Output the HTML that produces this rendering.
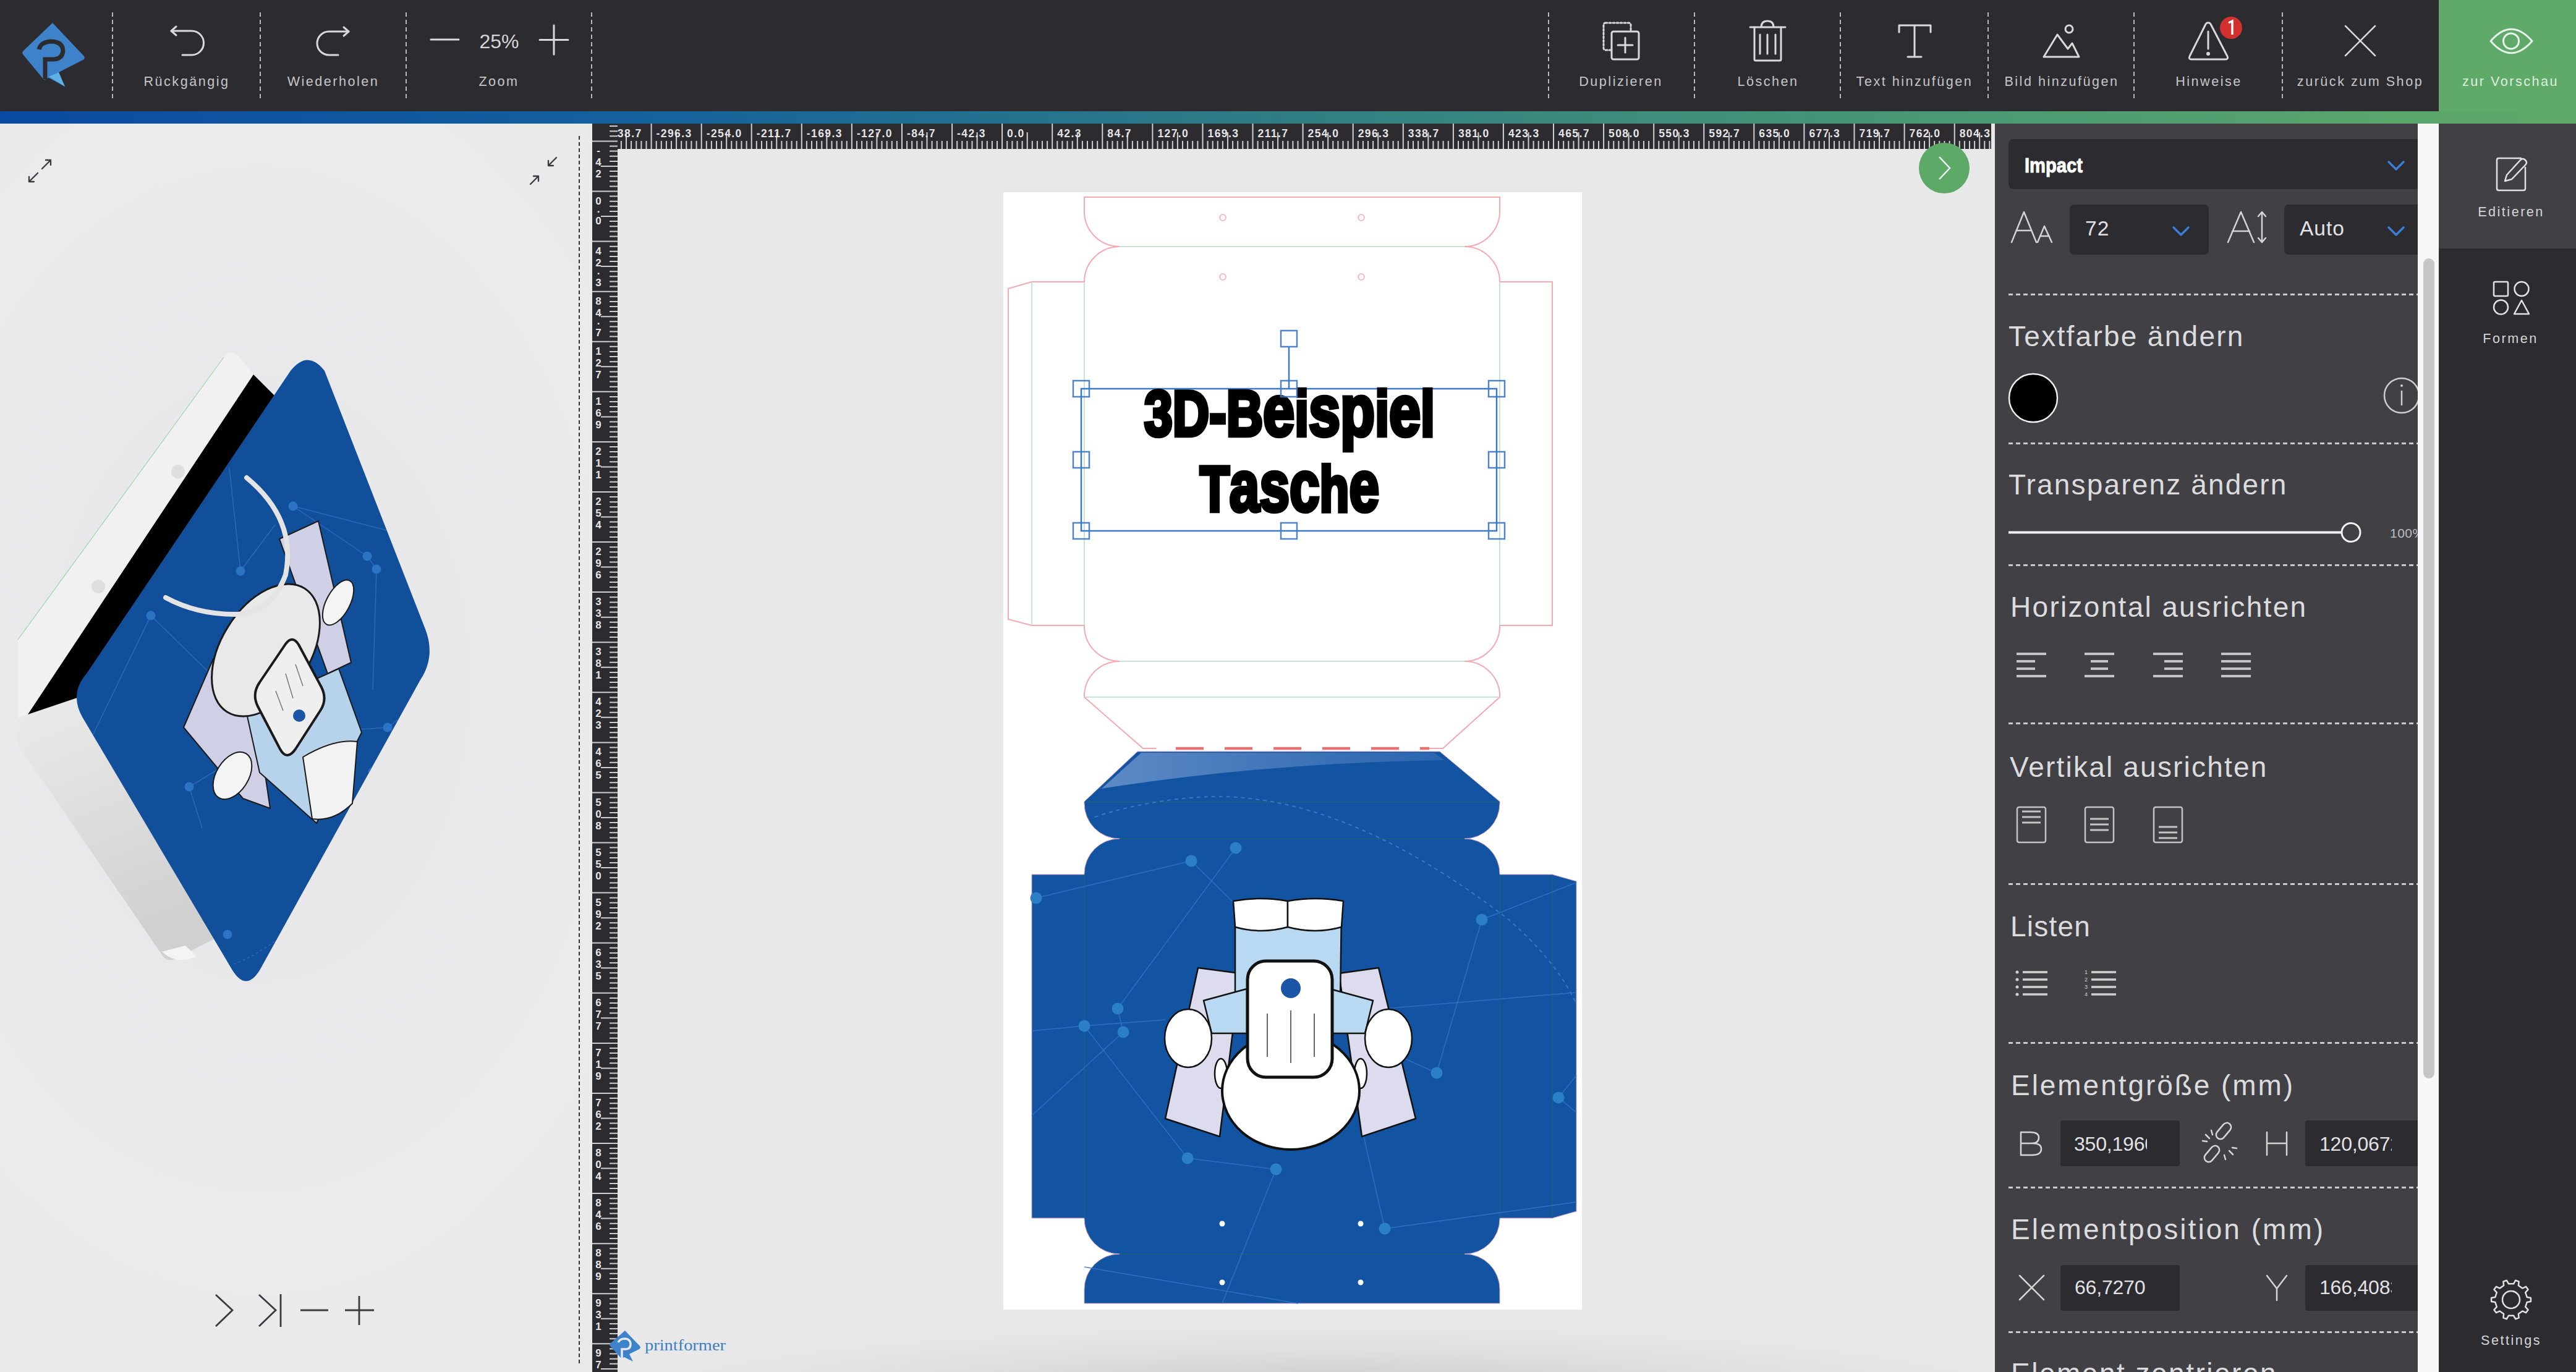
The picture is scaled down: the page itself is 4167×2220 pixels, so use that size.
<!DOCTYPE html>
<html><head><meta charset="utf-8">
<style>
html,body{margin:0;padding:0;}
body{width:4167px;height:2220px;overflow:hidden;position:relative;background:#e8e8e9;font-family:"Liberation Sans", sans-serif;}
.a{position:absolute;}
.hl{position:absolute;color:#c6c6c8;font-size:21.6px;letter-spacing:2.5px;white-space:nowrap;line-height:1;}
.dv{position:absolute;top:20px;height:140px;width:2px;background:repeating-linear-gradient(180deg,#b9b9bb 0 7px,transparent 7px 12px);}
.ph{position:absolute;color:#dcdcde;font-size:46px;letter-spacing:2.3px;white-space:nowrap;line-height:1;}
.sep{position:absolute;left:3249px;width:662px;height:3px;background:repeating-linear-gradient(90deg,#c9c9cb 0 7px,transparent 7px 12px);}
.inp{position:absolute;background:#2c2b30;border-radius:7px;}
.it{position:absolute;color:#e2e2e4;font-size:33px;letter-spacing:1px;white-space:nowrap;line-height:1;}
</style></head><body>

<div class="a" style="left:0;top:200px;width:958px;height:2020px;background:radial-gradient(ellipse 900px 1300px at 420px 900px,#e6e6e8 0%,#ebebec 70%,#e9e9ea 100%);"></div>
<div class="a" style="left:936px;top:220px;height:1986px;width:0;border-left:2px dashed #333;"></div>
<div class="a" style="left:999px;top:241px;width:2228px;height:1979px;background:#e8e8e8;"></div>
<div class="a" style="left:1000px;top:2100px;width:2227px;height:120px;background:radial-gradient(ellipse 1150px 110px at 1150px 150px,rgba(0,0,0,0.13),rgba(0,0,0,0.04) 60%,rgba(0,0,0,0) 100%);"></div>
<div class="a" style="left:0;top:0;width:4167px;height:180px;background:#2c2b30;"></div>
<div class="a" style="left:0;top:180px;width:4167px;height:20px;background:linear-gradient(90deg,#0a4aa2 0%,#15619c 25%,#307e84 50%,#4a9874 75%,#5eaa69 100%);"></div>
<div class="a" style="left:3945px;top:0;width:222px;height:180px;background:#5faa69;"></div>
<div class="dv" style="left:181px;"></div>
<div class="dv" style="left:420px;"></div>
<div class="dv" style="left:656px;"></div>
<div class="dv" style="left:956px;"></div>
<div class="dv" style="left:2504px;"></div>
<div class="dv" style="left:2740px;"></div>
<div class="dv" style="left:2976px;"></div>
<div class="dv" style="left:3215px;"></div>
<div class="dv" style="left:3451px;"></div>
<div class="dv" style="left:3691px;"></div>
<div class="hl" style="left:152px;width:300px;text-align:center;top:121px;">Rückgängig</div>
<div class="hl" style="left:389px;width:300px;text-align:center;top:121px;">Wiederholen</div>
<div class="hl" style="left:657px;width:300px;text-align:center;top:121px;">Zoom</div>
<div class="hl" style="left:2472px;width:300px;text-align:center;top:121px;">Duplizieren</div>
<div class="hl" style="left:2710px;width:300px;text-align:center;top:121px;">Löschen</div>
<div class="hl" style="left:2947px;width:300px;text-align:center;top:121px;">Text hinzufügen</div>
<div class="hl" style="left:3185px;width:300px;text-align:center;top:121px;">Bild hinzufügen</div>
<div class="hl" style="left:3423px;width:300px;text-align:center;top:121px;">Hinweise</div>
<div class="hl" style="left:3668px;width:300px;text-align:center;top:121px;">zurück zum Shop</div>
<div class="hl" style="left:3911px;width:300px;text-align:center;top:121px;color:#dfeedf;">zur Vorschau</div>
<div class="hl" style="left:740px;width:135px;text-align:center;top:51px;font-size:32px;letter-spacing:0;color:#d6d6d8;">25%</div>
<svg class="a" style="left:0;top:0;" width="4167" height="180" viewBox="0 0 4167 180">
<g>
 <path d="M85,37 L136,91 Q138,95 134,97 L95,117 L105,140 L79,126 L71,129 L37,88 Q35,85 38,82 Z" fill="#3e83c9"/>
 <path d="M79,124 L95,117 L105,140 Z" fill="#5fb0e6"/>
 <path d="M63,80 Q66,68 82,67 Q101,67 102,82 Q101,96 85,96 L73,96 L73,128" fill="none" stroke="#2c2b30" stroke-width="7" stroke-linecap="butt"/>
</g>
<g fill="none" stroke="#d9d9db" stroke-width="3" stroke-linecap="round" stroke-linejoin="round">
 <path d="M277,50 L310,50 A19.5,19.5 0 0 1 310,89 L295,89"/>
 <path d="M285,43 L277,50 L285,57"/>
 <path d="M564,51 L532,51 A19,19 0 0 0 532,89 L547,89"/>
 <path d="M556,44 L564,51 L556,58"/>
 <path d="M697,64 L742,64"/>
 <path d="M873,64.5 L919,64.5 M896,41 L896,88"/>
 <rect x="2594" y="37" width="44" height="44" rx="3" stroke-dasharray="3 3"/>
 <rect x="2607" y="51" width="44" height="45" rx="3" fill="#2c2b30"/>
 <path d="M2617,73 L2641,73 M2629,61 L2629,85"/>
 <path d="M2831,44 L2888,44 M2849,44 Q2849,34 2859,34 Q2869,34 2869,44"/>
 <path d="M2838,44 L2838,96 Q2838,98 2840,98 L2879,98 Q2881,98 2881,96 L2881,44"/>
 <path d="M2847,56 L2847,87 M2859,56 L2859,87 M2872,56 L2872,87"/>
 <path d="M3072,52 L3072,41 L3123,41 L3123,52 M3097,41 L3097,92 M3086,92 L3108,92"/>
 <circle cx="3347" cy="47" r="6"/>
 <path d="M3306,92 L3328,56 L3345,79 L3352,70 L3363,92 Z"/>
 <path d="M3572,37 Q3574,36 3576,39 L3603,91 Q3605,96 3600,96 L3545,96 Q3540,96 3542,91 L3568,39 Q3570,36 3572,37 Z"/>
 <path d="M3572,51 L3572,79"/>
 <path d="M3794,42 L3842,90 M3842,42 L3794,90" stroke-width="2.5"/>
 <path d="M4029,66.5 Q4062,28 4096,66.5 Q4062,105 4029,66.5 Z" stroke="#e8f3ea"/>
 <circle cx="4062" cy="66.5" r="12.5" stroke="#e8f3ea"/>
</g>
<circle cx="3572" cy="87" r="3" fill="#d9d9db"/>
<circle cx="3609" cy="45" r="18" fill="#d1302e"/>
<path d="M3605,37 L3611,34 L3611,56" fill="none" stroke="#fff" stroke-width="3.5"/>
</svg>
<svg class="a" style="left:0;top:0;" width="4167" height="2220" viewBox="0 0 4167 2220"><rect x="958" y="200" width="41" height="2020" fill="#2c2b30"/><rect x="999" y="200" width="2222" height="41" fill="#2c2b30"/><path d="M1004.9,228V241M1013.0,214V241M1021.1,228V241M1029.3,228V241M1037.4,228V241M1045.5,228V241M1053.6,200V241M1061.7,228V241M1069.8,228V241M1077.9,228V241M1086.0,228V241M1094.1,214V241M1102.2,228V241M1110.3,228V241M1118.4,228V241M1126.6,228V241M1134.7,200V241M1142.8,228V241M1150.9,228V241M1159.0,228V241M1167.1,228V241M1175.2,214V241M1183.3,228V241M1191.4,228V241M1199.5,228V241M1207.6,228V241M1215.7,200V241M1223.8,228V241M1232.0,228V241M1240.1,228V241M1248.2,228V241M1256.3,214V241M1264.4,228V241M1272.5,228V241M1280.6,228V241M1288.7,228V241M1296.8,200V241M1304.9,228V241M1313.0,228V241M1321.1,228V241M1329.3,228V241M1337.4,214V241M1345.5,228V241M1353.6,228V241M1361.7,228V241M1369.8,228V241M1377.9,200V241M1386.0,228V241M1394.1,228V241M1402.2,228V241M1410.3,228V241M1418.4,214V241M1426.5,228V241M1434.7,228V241M1442.8,228V241M1450.9,228V241M1459.0,200V241M1467.1,228V241M1475.2,228V241M1483.3,228V241M1491.4,228V241M1499.5,214V241M1507.6,228V241M1515.7,228V241M1523.8,228V241M1532.0,228V241M1540.1,200V241M1548.2,228V241M1556.3,228V241M1564.4,228V241M1572.5,228V241M1580.6,214V241M1588.7,228V241M1596.8,228V241M1604.9,228V241M1613.0,228V241M1621.1,200V241M1629.2,228V241M1637.4,228V241M1645.5,228V241M1653.6,228V241M1661.7,214V241M1669.8,228V241M1677.9,228V241M1686.0,228V241M1694.1,228V241M1702.2,200V241M1710.3,228V241M1718.4,228V241M1726.5,228V241M1734.7,228V241M1742.8,214V241M1750.9,228V241M1759.0,228V241M1767.1,228V241M1775.2,228V241M1783.3,200V241M1791.4,228V241M1799.5,228V241M1807.6,228V241M1815.7,228V241M1823.8,214V241M1831.9,228V241M1840.1,228V241M1848.2,228V241M1856.3,228V241M1864.4,200V241M1872.5,228V241M1880.6,228V241M1888.7,228V241M1896.8,228V241M1904.9,214V241M1913.0,228V241M1921.1,228V241M1929.2,228V241M1937.4,228V241M1945.5,200V241M1953.6,228V241M1961.7,228V241M1969.8,228V241M1977.9,228V241M1986.0,214V241M1994.1,228V241M2002.2,228V241M2010.3,228V241M2018.4,228V241M2026.5,200V241M2034.6,228V241M2042.8,228V241M2050.9,228V241M2059.0,228V241M2067.1,214V241M2075.2,228V241M2083.3,228V241M2091.4,228V241M2099.5,228V241M2107.6,200V241M2115.7,228V241M2123.8,228V241M2131.9,228V241M2140.1,228V241M2148.2,214V241M2156.3,228V241M2164.4,228V241M2172.5,228V241M2180.6,228V241M2188.7,200V241M2196.8,228V241M2204.9,228V241M2213.0,228V241M2221.1,228V241M2229.2,214V241M2237.3,228V241M2245.5,228V241M2253.6,228V241M2261.7,228V241M2269.8,200V241M2277.9,228V241M2286.0,228V241M2294.1,228V241M2302.2,228V241M2310.3,214V241M2318.4,228V241M2326.5,228V241M2334.6,228V241M2342.8,228V241M2350.9,200V241M2359.0,228V241M2367.1,228V241M2375.2,228V241M2383.3,228V241M2391.4,214V241M2399.5,228V241M2407.6,228V241M2415.7,228V241M2423.8,228V241M2431.9,200V241M2440.0,228V241M2448.2,228V241M2456.3,228V241M2464.4,228V241M2472.5,214V241M2480.6,228V241M2488.7,228V241M2496.8,228V241M2504.9,228V241M2513.0,200V241M2521.1,228V241M2529.2,228V241M2537.3,228V241M2545.5,228V241M2553.6,214V241M2561.7,228V241M2569.8,228V241M2577.9,228V241M2586.0,228V241M2594.1,200V241M2602.2,228V241M2610.3,228V241M2618.4,228V241M2626.5,228V241M2634.6,214V241M2642.7,228V241M2650.9,228V241M2659.0,228V241M2667.1,228V241M2675.2,200V241M2683.3,228V241M2691.4,228V241M2699.5,228V241M2707.6,228V241M2715.7,214V241M2723.8,228V241M2731.9,228V241M2740.0,228V241M2748.2,228V241M2756.3,200V241M2764.4,228V241M2772.5,228V241M2780.6,228V241M2788.7,228V241M2796.8,214V241M2804.9,228V241M2813.0,228V241M2821.1,228V241M2829.2,228V241M2837.3,200V241M2845.4,228V241M2853.6,228V241M2861.7,228V241M2869.8,228V241M2877.9,214V241M2886.0,228V241M2894.1,228V241M2902.2,228V241M2910.3,228V241M2918.4,200V241M2926.5,228V241M2934.6,228V241M2942.7,228V241M2950.9,228V241M2959.0,214V241M2967.1,228V241M2975.2,228V241M2983.3,228V241M2991.4,228V241M2999.5,200V241M3007.6,228V241M3015.7,228V241M3023.8,228V241M3031.9,228V241M3040.0,214V241M3048.1,228V241M3056.3,228V241M3064.4,228V241M3072.5,228V241M3080.6,200V241M3088.7,228V241M3096.8,228V241M3104.9,228V241M3113.0,228V241M3121.1,214V241M3129.2,228V241M3137.3,228V241M3145.4,228V241M3153.6,228V241M3161.7,200V241M3169.8,228V241M3177.9,228V241M3186.0,228V241M3194.1,228V241M3202.2,214V241M3210.3,228V241M3218.4,228V241" stroke="#d0d0d2" stroke-width="2" fill="none"/><clipPath id="trc"><rect x="999" y="200" width="2222" height="41"/></clipPath><g clip-path="url(#trc)" font-family="Liberation Sans" font-weight="bold" font-size="17.5" letter-spacing="1.4" fill="#e4e4e6"><text x="980.5" y="221.5">-338.7</text><text x="1061.6" y="221.5">-296.3</text><text x="1142.7" y="221.5">-254.0</text><text x="1223.7" y="221.5">-211.7</text><text x="1304.8" y="221.5">-169.3</text><text x="1385.9" y="221.5">-127.0</text><text x="1467.0" y="221.5">-84.7</text><text x="1548.1" y="221.5">-42.3</text><text x="1629.1" y="221.5">0.0</text><text x="1710.2" y="221.5">42.3</text><text x="1791.3" y="221.5">84.7</text><text x="1872.4" y="221.5">127.0</text><text x="1953.5" y="221.5">169.3</text><text x="2034.5" y="221.5">211.7</text><text x="2115.6" y="221.5">254.0</text><text x="2196.7" y="221.5">296.3</text><text x="2277.8" y="221.5">338.7</text><text x="2358.9" y="221.5">381.0</text><text x="2439.9" y="221.5">423.3</text><text x="2521.0" y="221.5">465.7</text><text x="2602.1" y="221.5">508.0</text><text x="2683.2" y="221.5">550.3</text><text x="2764.3" y="221.5">592.7</text><text x="2845.3" y="221.5">635.0</text><text x="2926.4" y="221.5">677.3</text><text x="3007.5" y="221.5">719.7</text><text x="3088.6" y="221.5">762.0</text><text x="3169.7" y="221.5">804.3</text></g><path d="M986,204.1H999M986,212.2H999M986,220.3H999M958,228.4H999M986,236.5H999M986,244.6H999M986,252.7H999M986,260.9H999M972,269.0H999M986,277.1H999M986,285.2H999M986,293.3H999M986,301.4H999M958,309.5H999M986,317.6H999M986,325.7H999M986,333.8H999M986,341.9H999M972,350.0H999M986,358.1H999M986,366.3H999M986,374.4H999M986,382.5H999M958,390.6H999M986,398.7H999M986,406.8H999M986,414.9H999M986,423.0H999M972,431.1H999M986,439.2H999M986,447.3H999M986,455.4H999M986,463.6H999M958,471.7H999M986,479.8H999M986,487.9H999M986,496.0H999M986,504.1H999M972,512.2H999M986,520.3H999M986,528.4H999M986,536.5H999M986,544.6H999M958,552.7H999M986,560.8H999M986,569.0H999M986,577.1H999M986,585.2H999M972,593.3H999M986,601.4H999M986,609.5H999M986,617.6H999M986,625.7H999M958,633.8H999M986,641.9H999M986,650.0H999M986,658.1H999M986,666.3H999M972,674.4H999M986,682.5H999M986,690.6H999M986,698.7H999M986,706.8H999M958,714.9H999M986,723.0H999M986,731.1H999M986,739.2H999M986,747.3H999M972,755.4H999M986,763.5H999M986,771.7H999M986,779.8H999M986,787.9H999M958,796.0H999M986,804.1H999M986,812.2H999M986,820.3H999M986,828.4H999M972,836.5H999M986,844.6H999M986,852.7H999M986,860.8H999M986,869.0H999M958,877.1H999M986,885.2H999M986,893.3H999M986,901.4H999M986,909.5H999M972,917.6H999M986,925.7H999M986,933.8H999M986,941.9H999M986,950.0H999M958,958.1H999M986,966.2H999M986,974.4H999M986,982.5H999M986,990.6H999M972,998.7H999M986,1006.8H999M986,1014.9H999M986,1023.0H999M986,1031.1H999M958,1039.2H999M986,1047.3H999M986,1055.4H999M986,1063.5H999M986,1071.7H999M972,1079.8H999M986,1087.9H999M986,1096.0H999M986,1104.1H999M986,1112.2H999M958,1120.3H999M986,1128.4H999M986,1136.5H999M986,1144.6H999M986,1152.7H999M972,1160.8H999M986,1168.9H999M986,1177.1H999M986,1185.2H999M986,1193.3H999M958,1201.4H999M986,1209.5H999M986,1217.6H999M986,1225.7H999M986,1233.8H999M972,1241.9H999M986,1250.0H999M986,1258.1H999M986,1266.2H999M986,1274.4H999M958,1282.5H999M986,1290.6H999M986,1298.7H999M986,1306.8H999M986,1314.9H999M972,1323.0H999M986,1331.1H999M986,1339.2H999M986,1347.3H999M986,1355.4H999M958,1363.5H999M986,1371.6H999M986,1379.8H999M986,1387.9H999M986,1396.0H999M972,1404.1H999M986,1412.2H999M986,1420.3H999M986,1428.4H999M986,1436.5H999M958,1444.6H999M986,1452.7H999M986,1460.8H999M986,1468.9H999M986,1477.1H999M972,1485.2H999M986,1493.3H999M986,1501.4H999M986,1509.5H999M986,1517.6H999M958,1525.7H999M986,1533.8H999M986,1541.9H999M986,1550.0H999M986,1558.1H999M972,1566.2H999M986,1574.3H999M986,1582.5H999M986,1590.6H999M986,1598.7H999M958,1606.8H999M986,1614.9H999M986,1623.0H999M986,1631.1H999M986,1639.2H999M972,1647.3H999M986,1655.4H999M986,1663.5H999M986,1671.6H999M986,1679.8H999M958,1687.9H999M986,1696.0H999M986,1704.1H999M986,1712.2H999M986,1720.3H999M972,1728.4H999M986,1736.5H999M986,1744.6H999M986,1752.7H999M986,1760.8H999M958,1768.9H999M986,1777.0H999M986,1785.2H999M986,1793.3H999M986,1801.4H999M972,1809.5H999M986,1817.6H999M986,1825.7H999M986,1833.8H999M986,1841.9H999M958,1850.0H999M986,1858.1H999M986,1866.2H999M986,1874.3H999M986,1882.5H999M972,1890.6H999M986,1898.7H999M986,1906.8H999M986,1914.9H999M986,1923.0H999M958,1931.1H999M986,1939.2H999M986,1947.3H999M986,1955.4H999M986,1963.5H999M972,1971.6H999M986,1979.7H999M986,1987.9H999M986,1996.0H999M986,2004.1H999M958,2012.2H999M986,2020.3H999M986,2028.4H999M986,2036.5H999M986,2044.6H999M972,2052.7H999M986,2060.8H999M986,2068.9H999M986,2077.0H999M986,2085.2H999M958,2093.3H999M986,2101.4H999M986,2109.5H999M986,2117.6H999M986,2125.7H999M972,2133.8H999M986,2141.9H999M986,2150.0H999M986,2158.1H999M986,2166.2H999M958,2174.3H999M986,2182.4H999M986,2190.6H999M986,2198.7H999M986,2206.8H999M972,2214.9H999" stroke="#d0d0d2" stroke-width="2" fill="none"/><g font-family="Liberation Sans" font-weight="bold" font-size="17" fill="#e4e4e6" text-anchor="middle"><text x="968" y="249.4">-</text><text x="968" y="268.4">4</text><text x="968" y="287.4">2</text><text x="968" y="330.5">0</text><text x="968" y="343.5">.</text><text x="968" y="362.5">0</text><text x="968" y="411.6">4</text><text x="968" y="430.6">2</text><text x="968" y="443.6">.</text><text x="968" y="462.6">3</text><text x="968" y="492.7">8</text><text x="968" y="511.7">4</text><text x="968" y="524.7">.</text><text x="968" y="543.7">7</text><text x="968" y="573.7">1</text><text x="968" y="592.7">2</text><text x="968" y="611.7">7</text><text x="968" y="654.8">1</text><text x="968" y="673.8">6</text><text x="968" y="692.8">9</text><text x="968" y="735.9">2</text><text x="968" y="754.9">1</text><text x="968" y="773.9">1</text><text x="968" y="817.0">2</text><text x="968" y="836.0">5</text><text x="968" y="855.0">4</text><text x="968" y="898.1">2</text><text x="968" y="917.1">9</text><text x="968" y="936.1">6</text><text x="968" y="979.1">3</text><text x="968" y="998.1">3</text><text x="968" y="1017.1">8</text><text x="968" y="1060.2">3</text><text x="968" y="1079.2">8</text><text x="968" y="1098.2">1</text><text x="968" y="1141.3">4</text><text x="968" y="1160.3">2</text><text x="968" y="1179.3">3</text><text x="968" y="1222.4">4</text><text x="968" y="1241.4">6</text><text x="968" y="1260.4">5</text><text x="968" y="1303.5">5</text><text x="968" y="1322.5">0</text><text x="968" y="1341.5">8</text><text x="968" y="1384.5">5</text><text x="968" y="1403.5">5</text><text x="968" y="1422.5">0</text><text x="968" y="1465.6">5</text><text x="968" y="1484.6">9</text><text x="968" y="1503.6">2</text><text x="968" y="1546.7">6</text><text x="968" y="1565.7">3</text><text x="968" y="1584.7">5</text><text x="968" y="1627.8">6</text><text x="968" y="1646.8">7</text><text x="968" y="1665.8">7</text><text x="968" y="1708.9">7</text><text x="968" y="1727.9">1</text><text x="968" y="1746.9">9</text><text x="968" y="1789.9">7</text><text x="968" y="1808.9">6</text><text x="968" y="1827.9">2</text><text x="968" y="1871.0">8</text><text x="968" y="1890.0">0</text><text x="968" y="1909.0">4</text><text x="968" y="1952.1">8</text><text x="968" y="1971.1">4</text><text x="968" y="1990.1">6</text><text x="968" y="2033.2">8</text><text x="968" y="2052.2">8</text><text x="968" y="2071.2">9</text><text x="968" y="2114.3">9</text><text x="968" y="2133.3">3</text><text x="968" y="2152.3">1</text><text x="968" y="2195.3">9</text><text x="968" y="2214.3">7</text><text x="968" y="2233.3">3</text></g></svg>
<svg class="a" style="left:3100px;top:228px;" width="90" height="90" viewBox="0 0 90 90">
<circle cx="45" cy="44" r="41" fill="#5daa68"/>
<path d="M37,26 L54,44 L37,62" fill="none" stroke="#eef6ef" stroke-width="2.5"/>
</svg>
<div class="a" style="left:3227px;top:200px;width:684px;height:2020px;background:#414045;"></div>
<div class="a" style="left:3911px;top:200px;width:34px;height:2020px;background:#f7f7f7;"></div>
<div class="a" style="left:3920px;top:418px;width:18px;height:1327px;background:#c6c6c6;border-radius:9px;"></div>
<div class="a" style="left:3945px;top:200px;width:222px;height:2020px;background:#2c2b30;"></div>
<div class="a" style="left:3945px;top:200px;width:222px;height:202px;background:#414045;"></div>
<div class="inp" style="left:3249px;top:225px;width:680px;height:81px;border-radius:8px;"></div>
<div class="inp" style="left:3348px;top:331px;width:225px;height:81px;"></div>
<div class="inp" style="left:3695px;top:331px;width:240px;height:81px;"></div>
<div class="inp" style="left:3333px;top:1813px;width:193px;height:74px;border-radius:4px;"></div>
<div class="inp" style="left:3729px;top:1813px;width:210px;height:74px;border-radius:4px;"></div>
<div class="inp" style="left:3333px;top:2047px;width:193px;height:74px;border-radius:4px;"></div>
<div class="inp" style="left:3729px;top:2047px;width:210px;height:74px;border-radius:4px;"></div>
<div class="sep" style="top:475px;"></div>
<div class="sep" style="top:716px;"></div>
<div class="sep" style="top:913px;"></div>
<div class="sep" style="top:1169px;"></div>
<div class="sep" style="top:1429px;"></div>
<div class="sep" style="top:1686px;"></div>
<div class="sep" style="top:1920px;"></div>
<div class="sep" style="top:2154px;"></div>
<div class="ph" style="left:3249px;top:521.1px;letter-spacing:2.28px;">Textfarbe ändern</div>
<div class="ph" style="left:3249px;top:761.1px;letter-spacing:2.16px;">Transparenz ändern</div>
<div class="ph" style="left:3252px;top:959.1px;letter-spacing:2.3px;">Horizontal ausrichten</div>
<div class="ph" style="left:3251px;top:1218.1px;letter-spacing:2.19px;">Vertikal ausrichten</div>
<div class="ph" style="left:3252px;top:1476.1px;letter-spacing:1.2px;">Listen</div>
<div class="ph" style="left:3253px;top:1733.1px;letter-spacing:2.95px;">Elementgröße (mm)</div>
<div class="ph" style="left:3253px;top:1966.1px;letter-spacing:3.04px;">Elementposition (mm)</div>
<div class="ph" style="left:3253px;top:2199.1px;letter-spacing:2.5px;">Element zentrieren</div>
<div class="it" style="left:3373px;top:352.6px;font-size:33.5px;">72</div>
<div class="it" style="left:3720px;top:352.6px;font-size:33.5px;">Auto</div>
<div class="a" style="left:3355px;top:1830px;width:118px;height:50px;overflow:hidden;"><div class="it" style="left:0;top:5.4px;font-size:32px;letter-spacing:-0.2px;">350,1960</div></div>
<div class="a" style="left:3752px;top:1830px;width:117px;height:50px;overflow:hidden;"><div class="it" style="left:0;top:5.4px;font-size:32px;letter-spacing:-0.2px;">120,0672</div></div>
<div class="it" style="left:3356px;top:2067.4px;font-size:32px;letter-spacing:-0.2px;">66,7270</div>
<div class="a" style="left:3752px;top:2060px;width:117px;height:50px;overflow:hidden;"><div class="it" style="left:0;top:7.4px;font-size:32px;letter-spacing:-0.2px;">166,4083</div></div>
<div class="it" style="left:3866px;top:852.2px;font-size:21px;color:#bdbdbf;letter-spacing:0.5px;">100%</div>
<div class="hl" style="left:3962px;width:200px;text-align:center;top:332.3px;color:#d6d6d8;">Editieren</div>
<div class="hl" style="left:3961px;width:200px;text-align:center;top:536.7px;color:#d6d6d8;">Formen</div>
<div class="hl" style="left:3962px;width:200px;text-align:center;top:2157.7px;color:#d6d6d8;">Settings</div>
<svg class="a" style="left:3200px;top:200px;" width="967" height="2020" viewBox="3200 200 967 2020">
<text x="3275" y="279" font-family="Liberation Sans" font-weight="bold" font-size="34" fill="#fff" stroke="#fff" stroke-width="1" textLength="94" lengthAdjust="spacingAndGlyphs">Impact</text>
<g fill="none" stroke="#3b7fd9" stroke-width="3.5" stroke-linecap="round" stroke-linejoin="round">
 <path d="M3864,262 L3876,274 L3888,262"/>
 <path d="M3516,368 L3528,380 L3540,368"/>
 <path d="M3864,368 L3876,380 L3888,368"/>
</g>
<g fill="none" stroke="#d4d4d6" stroke-width="2.5" stroke-linejoin="round" stroke-linecap="round">
 <path d="M3254,392 L3274,343 L3294,392 M3262,373 L3286,373"/>
 <path d="M3296,392 L3307,366 L3319,392 M3300,382 L3315,382"/>
 <path d="M3604,392 L3625,343 L3646,392 M3611,374 L3639,374"/>
 <path d="M3659,344 L3659,391 M3653,350 L3659,343 L3665,350 M3653,385 L3659,392 L3665,385"/>
</g>
<circle cx="3289" cy="644" r="39" fill="#000" stroke="#eee" stroke-width="2.5"/>
<circle cx="3885" cy="640" r="28" fill="none" stroke="#cfcfd1" stroke-width="2.5"/>
<path d="M3885,632 L3885,656" stroke="#cfcfd1" stroke-width="2.5"/>
<circle cx="3885" cy="624" r="2" fill="#cfcfd1"/>
<path d="M3249,861.5 L3788,861.5" stroke="#f2f2f2" stroke-width="4"/>
<circle cx="3803" cy="861.5" r="15" fill="#414045" stroke="#f2f2f2" stroke-width="3"/>
<g stroke="#c4c4c6" stroke-width="4" fill="none">
 <path d="M3262,1058H3310 M3262,1070H3292 M3262,1082H3292 M3262,1094H3310"/>
 <path d="M3372,1058H3420 M3382,1070H3410 M3382,1082H3410 M3372,1094H3420"/>
 <path d="M3483,1058H3531 M3501,1070H3531 M3501,1082H3531 M3483,1094H3531"/>
 <path d="M3593,1058H3641 M3593,1070H3641 M3593,1082H3641 M3593,1094H3641"/>
</g>
<g stroke="#c4c4c6" stroke-width="2.5" fill="none">
 <rect x="3263" y="1306" width="46" height="57" rx="3"/>
 <rect x="3373" y="1306" width="46" height="57" rx="3"/>
 <rect x="3484" y="1306" width="46" height="57" rx="3"/>
 <path d="M3271,1313H3301 M3271,1322H3301 M3271,1331H3301" stroke-width="3"/>
 <path d="M3381,1325H3411 M3381,1334H3411 M3381,1343H3411" stroke-width="3"/>
 <path d="M3492,1338H3522 M3492,1347H3522 M3492,1356H3522" stroke-width="3"/>
</g>
<g stroke="#d0d0d2" stroke-width="3.5" fill="none">
 <path d="M3272,1573H3312 M3272,1585H3312 M3272,1597H3312 M3272,1609H3312"/>
 <path d="M3383,1573H3423 M3383,1585H3423 M3383,1597H3423 M3383,1609H3423"/>
</g>
<g fill="#d0d0d2"><circle cx="3263" cy="1573" r="2.5"/><circle cx="3263" cy="1585" r="2.5"/><circle cx="3263" cy="1597" r="2.5"/><circle cx="3263" cy="1609" r="2.5"/></g>
<g font-family="Liberation Sans" font-size="9" fill="#d0d0d2"><text x="3372" y="1576">1</text><text x="3372" y="1588">2</text><text x="3372" y="1600">3</text><text x="3372" y="1612">4</text></g>
<g fill="none" stroke="#d6d6d8" stroke-width="2.5" stroke-linecap="round">
 <path d="M3269,1832 L3269,1869 L3287,1869 Q3302,1869 3302,1859 Q3302,1850 3288,1850 L3269,1850 M3269,1832 L3285,1832 Q3298,1832 3298,1841 Q3298,1850 3286,1850"/>
 <path d="M3667,1832 L3667,1869 M3699,1832 L3699,1869 M3667,1850 L3699,1850"/>
 <path d="M3267,2064 L3306,2103 M3306,2064 L3267,2103"/>
 <path d="M3667,2064 L3683,2085 L3699,2064 M3683,2085 L3683,2104"/>
 <rect x="3590" y="1815" width="14" height="30" rx="7" transform="rotate(40 3597 1830)"/>
 <rect x="3571" y="1852" width="14" height="30" rx="7" transform="rotate(40 3578 1867)"/>
 <path d="M3568,1836 L3574,1842 M3577,1829 L3579,1836 M3563,1846 L3570,1847 M3606,1862 L3612,1868 M3598,1869 L3600,1876 M3611,1857 L3618,1858"/>
</g>
<g fill="none" stroke="#e2e2e4" stroke-width="2.5" stroke-linejoin="round" stroke-linecap="round">
 <path d="M4078,256 L4042,256 Q4039,256 4039,259 L4039,305 Q4039,308 4042,308 L4082,308 Q4085,308 4085,305 L4085,271"/>
 <path d="M4055,283 L4077,259 Q4081,255 4085,259 Q4089,263 4085,267 L4063,290 L4052,293 Z"/>
 <rect x="4034" y="456" width="23" height="23" rx="2"/>
 <circle cx="4079" cy="467.5" r="11.5"/>
 <circle cx="4045.5" cy="497" r="11.5"/>
 <path d="M4079,486 L4091,508 L4067,508 Z"/>
</g>
</svg>
<svg class="a" style="left:3200px;top:200px;" width="967" height="2020" viewBox="3200 200 967 2020"><g fill="none" stroke="#e2e2e4" stroke-width="2.5" stroke-linejoin="round"><path d="M4087.7,2098.9 L4093.9,2100.1 L4093.9,2105.9 L4087.7,2107.1 L4085.2,2114.7 L4089.5,2119.4 L4086.1,2124.1 L4080.3,2121.4 L4073.9,2126.1 L4074.6,2132.4 L4069.1,2134.2 L4066.0,2128.7 L4058.0,2128.7 L4054.9,2134.2 L4049.4,2132.4 L4050.1,2126.1 L4043.7,2121.4 L4037.9,2124.1 L4034.5,2119.4 L4038.8,2114.7 L4036.3,2107.1 L4030.1,2105.9 L4030.1,2100.1 L4036.3,2098.9 L4038.8,2091.3 L4034.5,2086.6 L4037.9,2081.9 L4043.7,2084.6 L4050.1,2079.9 L4049.4,2073.6 L4054.9,2071.8 L4058.0,2077.3 L4066.0,2077.3 L4069.1,2071.8 L4074.6,2073.6 L4073.9,2079.9 L4080.3,2084.6 L4086.1,2081.9 L4089.5,2086.6 L4085.2,2091.3 Z"/><circle cx="4062" cy="2103" r="14"/></g>
</svg>
<div class="a" style="left:3911px;top:200px;width:34px;height:2020px;background:#f7f7f7;"></div>
<div class="a" style="left:3920px;top:418px;width:18px;height:1327px;background:#c6c6c6;border-radius:9px;"></div>
<svg class="a" style="left:0;top:0;" width="4167" height="2220" viewBox="0 0 4167 2220"><rect x="1623" y="311" width="936" height="1808" fill="#fff"/><path d="M1811,399 A57,57 0 0 1 1754,342 L1754,319 L2426,319 L2426,342 A57,57 0 0 1 2369,399 A57,57 0 0 1 2426,456 L2511,456 L2511,1012 L2426,1012 L2426,1013 A57,57 0 0 1 2369,1070 A57,57 0 0 1 2426,1122 L2426,1128 L2334,1211 L2310,1211 M1870,1211 L1849,1211 L1754,1128 L1754,1122 A57,57 0 0 1 1811,1070 A57,57 0 0 1 1754,1013 L1754,1012 L1669,1012 L1631,1002 L1631,467 L1669,456 L1754,456 A57,57 0 0 1 1811,399" fill="none" stroke="#f7a9b0" stroke-width="2"/><path d="M1811,399H2369 M1811,1070H2369 M1754,1128H2426 M1754,456V1012 M2426,456V1012 M1669,456V1012" fill="none" stroke="#b6dcc4" stroke-width="1.5"/><path d="M1902,1211H2312" stroke="#ee6f6f" stroke-width="4.5" stroke-dasharray="45 34"/><circle cx="1978" cy="352" r="5" fill="none" stroke="#f7a9b0" stroke-width="1.5"/><circle cx="2202" cy="352" r="5" fill="none" stroke="#f7a9b0" stroke-width="1.5"/><circle cx="1978" cy="448" r="5" fill="none" stroke="#f7a9b0" stroke-width="1.5"/><circle cx="2202" cy="448" r="5" fill="none" stroke="#f7a9b0" stroke-width="1.5"/><path d="M1840,1216 L2329,1216 L2426,1297 L2426,1300 A57,57 0 0 1 2369,1357 A57,57 0 0 1 2426,1414 L2426,1415 L2511,1415 L2550,1426 L2550,1960 L2511,1971 L2426,1971 L2426,1972 A57,57 0 0 1 2369,2029 A57,57 0 0 1 2426,2086 L2426,2109 L1754,2109 L1754,2086 A57,57 0 0 1 1811,2029 A57,57 0 0 1 1754,1972 L1754,1971 L1669,1971 L1669,1415 L1754,1415 L1754,1414 A57,57 0 0 1 1811,1357 A57,57 0 0 1 1754,1300 L1754,1297 Z" fill="#1253a2" stroke="#c9a0c0" stroke-width="1"/><defs><linearGradient id="gl" x1="0" y1="0" x2="1" y2="0"><stop offset="0" stop-color="#a9c2ea" stop-opacity="0.5"/><stop offset="1" stop-color="#8fb0e0" stop-opacity="0.2"/></linearGradient></defs><path d="M1782,1276 L1846,1218 L2320,1218 L2336,1230 Q2050,1234 1782,1276 Z" fill="url(#gl)"/><path d="M1754,1298H2426 M1811,1357H2369 M1811,2029H2369 M1754,1415V1971 M2426,1415V1971 M2511,1415V1971" stroke="#1f6a74" stroke-width="1.5" opacity="0.75"/><path d="M1771,1322 C1850,1295 1950,1285 2000,1290 C2150,1300 2300,1380 2438,1486 C2490,1530 2530,1580 2550,1625" fill="none" stroke="#3f86d6" stroke-width="2" stroke-dasharray="6 6" opacity="0.75"/><g stroke="#2f74c6" stroke-width="1.6" opacity="0.85"><line x1="1676" y1="1453" x2="1927" y2="1393"/><line x1="1927" y1="1393" x2="2000" y2="1465"/><line x1="1999" y1="1372" x2="1808" y2="1632"/><line x1="1808" y1="1632" x2="1817" y2="1670"/><line x1="1754" y1="1660" x2="1669" y2="1668"/><line x1="1754" y1="1660" x2="1885" y2="1650"/><line x1="1817" y1="1670" x2="1669" y2="1805"/><line x1="1754" y1="1660" x2="1921" y2="1874"/><line x1="1921" y1="1874" x2="2064" y2="1892"/><line x1="2064" y1="1892" x2="1977" y2="2109"/><line x1="2397" y1="1488" x2="2550" y2="1428"/><line x1="2397" y1="1488" x2="2324" y2="1736"/><line x1="2324" y1="1736" x2="2270" y2="1712"/><line x1="2240" y1="1988" x2="2550" y2="1945"/><line x1="2205" y1="1835" x2="2240" y2="1988"/><line x1="2241" y1="1632" x2="2550" y2="1606"/><line x1="2521" y1="1776" x2="2550" y2="1740"/><line x1="2521" y1="1776" x2="2550" y2="1800"/><line x1="1754" y1="2050" x2="2100" y2="2109"/></g><g fill="#2a7fc6"><circle cx="1999" cy="1372" r="9.5"/><circle cx="1927" cy="1393" r="9.5"/><circle cx="1676" cy="1453" r="9.5"/><circle cx="2397" cy="1488" r="9.5"/><circle cx="1808" cy="1632" r="9.5"/><circle cx="1754" cy="1660" r="9.5"/><circle cx="1817" cy="1670" r="9.5"/><circle cx="2324" cy="1736" r="9.5"/><circle cx="2521" cy="1776" r="9.5"/><circle cx="1921" cy="1874" r="9.5"/><circle cx="2064" cy="1892" r="9.5"/><circle cx="2240" cy="1988" r="9.5"/></g><g fill="#fff"><circle cx="1977" cy="1980" r="4.5"/><circle cx="2201" cy="1980" r="4.5"/><circle cx="1977" cy="2075" r="4.5"/><circle cx="2201" cy="2075" r="4.5"/></g><g stroke="#111" stroke-width="2.5" stroke-linejoin="round">
 <path d="M1938,1566 L2006,1575 L1973,1839 L1885,1810 Z" fill="#dcdcee"/>
 <path d="M2230,1566 L2166,1575 L2203,1839 L2290,1810 Z" fill="#dcdcee"/>
 <path d="M1998,1473 L2170,1473 L2168,1620 L1998,1620 Z" fill="#b9d8f2"/>
 <path d="M1947,1619 L2017,1600 L2017,1672 L1960,1672 Z" fill="#b9d8f2"/>
 <path d="M2221,1619 L2151,1600 L2151,1672 L2208,1672 Z" fill="#b9d8f2"/>
 <path d="M1995,1458 Q2040,1450 2083,1458 L2083,1500 Q2040,1512 1998,1500 Z" fill="#fff"/>
 <path d="M2083,1458 Q2128,1450 2173,1458 L2170,1500 Q2128,1512 2083,1500 Z" fill="#fff"/>
 <ellipse cx="1922" cy="1680" rx="38" ry="47" fill="#fff"/>
 <ellipse cx="2246" cy="1680" rx="38" ry="47" fill="#fff"/>
 <ellipse cx="1975" cy="1737" rx="10" ry="24" fill="#fff"/>
 <ellipse cx="2201" cy="1737" rx="10" ry="24" fill="#fff"/>
 <ellipse cx="2088" cy="1765" rx="111" ry="95" fill="#fff" stroke-width="4"/>
 <rect x="2018" y="1555" width="137" height="188" rx="30" fill="#fff" stroke-width="5"/>
</g>
<circle cx="2088" cy="1599" r="16" fill="#1a55a8"/>
<g stroke="#666" stroke-width="2"><path d="M2050,1640V1710 M2088,1635V1720 M2126,1640V1710"/></g><rect x="1749" y="629" width="672" height="230" fill="none" stroke="#3d78c3" stroke-width="2.5"/><line x1="2085" y1="562" x2="2085" y2="629" stroke="#3d78c3" stroke-width="2.5"/><g font-family="Liberation Sans" font-weight="bold" font-size="104" fill="#000" stroke="#000" stroke-width="6.5" stroke-linejoin="miter"><text x="1851" y="705" textLength="470" lengthAdjust="spacingAndGlyphs">3D-B<tspan font-size="116">e</tspan>i<tspan font-size="116">sp</tspan>i<tspan font-size="116">e</tspan>l</text><text x="1941" y="827" textLength="290" lengthAdjust="spacingAndGlyphs">T<tspan font-size="116">asc</tspan>h<tspan font-size="116">e</tspan></text></g><g fill="none" stroke="#3d78c3" stroke-width="2.5" opacity="0.9"><rect x="1736" y="616" width="26" height="26"/><rect x="2072" y="616" width="26" height="26"/><rect x="2408" y="616" width="26" height="26"/><rect x="1736" y="731" width="26" height="26"/><rect x="2408" y="731" width="26" height="26"/><rect x="1736" y="846" width="26" height="26"/><rect x="2072" y="846" width="26" height="26"/><rect x="2408" y="846" width="26" height="26"/><rect x="2072" y="535" width="26" height="26"/></g></svg>
<svg class="a" style="left:0;top:200px;" width="958" height="2020" viewBox="0 200 958 2020"><defs><linearGradient id="gs" x1="0" y1="0" x2="0.3" y2="1"><stop offset="0" stop-color="#ececec"/><stop offset="1" stop-color="#d0d0d0"/></linearGradient></defs><path d="M29,1160 L128,1110 L150,1140 L365,1510 L290,1548 Q270,1560 262,1545 L29,1205 Z" fill="url(#gs)"/><path d="M262,1540 Q285,1562 318,1548 L300,1530 Z" fill="#f4f4f4"/><path d="M362,578 Q372,566 384,574 L412,608 L45,1156 L29,1162 L29,1035 Z" fill="#f1f1f1"/><circle cx="288" cy="763" r="11" fill="#dedede"/><circle cx="159" cy="949" r="11" fill="#dedede"/><path d="M362,578 L29,1035" stroke="#9fd3b5" stroke-width="1.2" fill="none"/><path d="M410,606 L444,640 L128,1128 L45,1156 Z" fill="#000"/><path d="M470,600 Q498,565 525,600 L688,1018 Q705,1062 680,1100 L420,1570 Q398,1605 376,1570 L133,1160 Q112,1122 140,1090 Z" fill="#124f9a"/><clipPath id="fc"><path d="M470,600 Q498,565 525,600 L688,1018 Q705,1062 680,1100 L420,1570 Q398,1605 376,1570 L133,1160 Q112,1122 140,1090 Z"/></clipPath><g clip-path="url(#fc)"><g stroke="#2f6fbf" stroke-width="1.5" opacity="0.85" fill="none"><path d="M474,819 L625,858 M389,924 L371,757 M389,924 L445,849 M244,996 L340,1090 M594,900 L609,921 L603,1116 M306,1273 L371,1234 M306,1273 L327,1340 M627,1177 L572,1181 M603,1249 L572,1340 M594,900 L474,819 M140,1210 L244,996 M627,1177 L690,1130"/><path d="M378,1560 Q540,1500 695,1150" stroke-dasharray="4 4"/></g><g fill="#2b74c4"><circle cx="474" cy="819" r="7.5"/><circle cx="389" cy="924" r="7.5"/><circle cx="244" cy="996" r="7.5"/><circle cx="594" cy="900" r="7.5"/><circle cx="609" cy="921" r="7.5"/><circle cx="627" cy="1177" r="7.5"/><circle cx="603" cy="1249" r="7.5"/><circle cx="306" cy="1273" r="7.5"/><circle cx="368" cy="1512" r="7.5"/><circle cx="690" cy="1130" r="7.5"/></g></g><g stroke="#1a1a1a" stroke-width="2" stroke-linejoin="round">
 <path d="M515,843 L568,1072 L530,1090 L452,872 Z" fill="#cfd0e6"/>
 <path d="M297,1177 L345,1066 L405,1092 L437,1308 L393,1292 Z" fill="#cfd0e6"/>
 <path d="M398,1150 L548,1082 L585,1185 L512,1332 L420,1250 Z" fill="#b7d3ec"/>
 <path d="M490,1225 Q540,1195 578,1200 L570,1300 Q540,1330 505,1325 Z" fill="#f2f2f2"/>
 <ellipse cx="430" cy="1052" rx="72" ry="118" transform="rotate(32 430 1052)" fill="#e9e9e9" stroke-width="3"/>
 <path d="M420,1104 L462,1042 Q473,1027 483,1043 L520,1112 Q530,1132 518,1150 L478,1212 Q464,1232 453,1212 L417,1143 Q407,1123 420,1104 Z" fill="#efefef" stroke-width="4"/>
 <ellipse cx="547" cy="975" rx="19" ry="40" transform="rotate(28 547 975)" fill="#f4f4f4"/>
 <ellipse cx="376" cy="1255" rx="26" ry="42" transform="rotate(32 376 1255)" fill="#f4f4f4"/>
</g>
<circle cx="484" cy="1158" r="10" fill="#1a55a8"/>
<path d="M399,773 Q480,840 462,930 Q440,990 384,994 Q320,995 268,967" fill="none" stroke="#e4e4e4" stroke-width="8" stroke-linecap="round"/>
<g stroke="#777" stroke-width="1.5"><path d="M478,1075 L490,1110 M462,1090 L474,1130 M446,1118 L458,1150"/></g></svg>
<svg class="a" style="left:0;top:240px;" width="958" height="80" viewBox="0 240 958 80">
<g fill="none" stroke="#3a3a3e" stroke-width="2.3" stroke-linecap="round">
 <path d="M47,294 L61,280 M47,294 L47,286 M47,294 L55,294"/>
 <path d="M82,259 L68,273 M82,259 L74,259 M82,259 L82,267"/>
 <path d="M900,255 L887,268 M887,268 L887,260 M887,268 L895,268"/>
 <path d="M858,298 L871,285 M871,285 L863,285 M871,285 L871,293"/>
</g></svg>
<svg class="a" style="left:300px;top:2080px;" width="340" height="80" viewBox="300 2080 340 80">
<g fill="none" stroke="#3a3a3e" stroke-width="2.8">
 <path d="M349,2095 L376,2120 L349,2146"/>
 <path d="M419,2095 L446,2120 L419,2146 M454,2094 V2147"/>
 <path d="M486,2120 H531"/>
 <path d="M558,2120 H605 M581,2097 V2144"/>
</g></svg>
<svg class="a" style="left:980px;top:2145px;" width="220" height="65" viewBox="980 2145 220 65">
 <path d="M1011,2153 L1035,2178 Q1037,2181 1034,2183 L1018,2191 L1024,2203 L1010,2196 L1005,2198 L987,2178 Q985,2176 987,2174 Z" fill="#3e83c9"/>
 <path d="M1000,2172 Q1003,2166 1011,2166 Q1020,2167 1020,2175 Q1020,2183 1012,2183 L1006,2183 L1006,2198" fill="none" stroke="#e8e8e8" stroke-width="3.5"/>
 <text x="1043" y="2185" font-family="Liberation Serif" font-size="25" fill="#3e7fc4" textLength="131" lengthAdjust="spacingAndGlyphs">printformer</text>
</svg>
</body></html>
